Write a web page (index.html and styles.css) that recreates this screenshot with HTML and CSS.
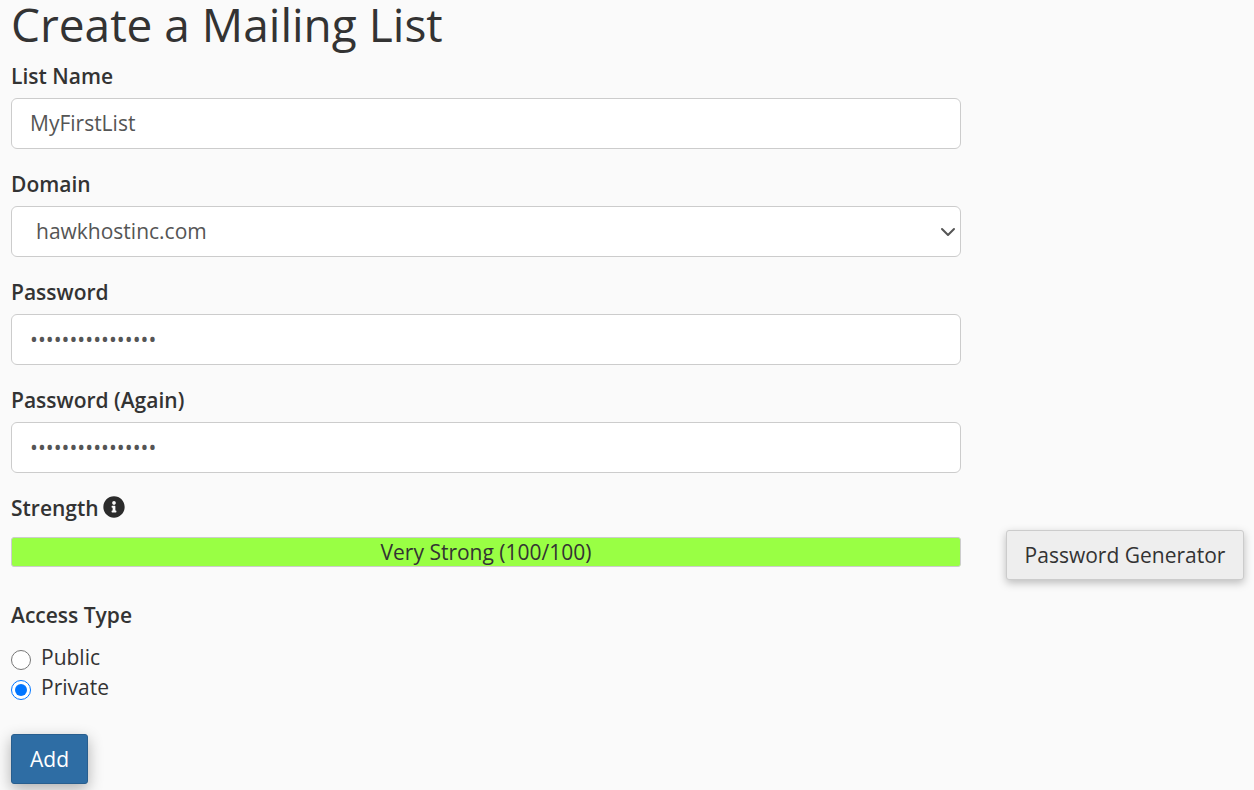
FILE: index.html
```html
<!DOCTYPE html>
<html lang="en">

<head>
    <meta charset="UTF-8">
    <meta name="viewport" content="width=device-width, initial-scale=1.0">
    <title>Create a Mailing List</title>
    <link rel="stylesheet" href="styles.css">
</head>

<body>
    <div class="wrap">
        <h1>Create a Mailing List</h1>

        <form class="list_form">
            <div class="form_group">
                <label for="list-name">List Name</label>
                <input type="text" id="list-name" class="form_control" value="MyFirstList">
            </div>

            <div class="form_group">
                <label for="domain">Domain</label>
                <select id="domain" class="form_control form_select">
                    <option>hawkhostinc.com</option>
                </select>
            </div>

            <div class="form_group">
                <label for="password">Password</label>
                <input type="password" id="password" class="form_control" value="abcdefghijklmnop">
            </div>

            <div class="form_group">
                <label for="password-again">Password (Again)</label>
                <input type="password" id="password-again" class="form_control" value="abcdefghijklmnop">
            </div>

            <div class="strength_label">
                <label>Strength</label>
                <svg class="info_icon" viewBox="0 0 512 512" width="22" height="22">
                    <path fill="#2b2b2b" d="M256 8C119 8 8 119 8 256s111 248 248 248 248-111 248-248S393 8 256 8zm0 110c23 0 42 19 42 42s-19 42-42 42-42-19-42-42 19-42 42-42zm56 254c0 7-5 12-12 12h-88c-7 0-12-5-12-12v-24c0-7 5-12 12-12h12v-64h-12c-7 0-12-5-12-12v-24c0-7 5-12 12-12h64c7 0 12 5 12 12v100h12c7 0 12 5 12 12v24z"/>
                </svg>
            </div>

            <div class="strength_row">
                <div class="strength_bar">Very Strong (100/100)</div>
                <button type="button" class="btn btn_default">Password Generator</button>
            </div>

            <div class="access_type">
                <label class="access_title">Access Type</label>
                <div class="radio_row">
                    <input type="radio" name="access" id="public">
                    <label for="public">Public</label>
                </div>
                <div class="radio_row">
                    <input type="radio" name="access" id="private" checked>
                    <label for="private">Private</label>
                </div>
            </div>

            <button type="button" class="btn btn_primary">Add</button>
        </form>
    </div>
</body>

</html>
```

FILE: styles.css
```css
html,
body {
    margin: 0;
    height: 100%;
    overflow: hidden;
}

body {
    background: #fafafa;
    color: #333;
    font-family: "Open Sans", sans-serif;
    font-size: 21px;
}

.wrap {
    padding-left: 11px;
}

h1 {
    margin: 0 0 14px;
    font-size: 46px;
    font-weight: 400;
    line-height: 48px;
}

label {
    font-weight: 600;
}

.form_group {
    margin-bottom: 21px;
}

.form_group label {
    display: block;
    height: 29px;
    line-height: 28px;
    margin-bottom: 7px;
}

.form_control {
    display: block;
    box-sizing: border-box;
    width: 950px;
    height: 51px;
    padding: 0 18px 2px;
    border: 1px solid #ccc;
    border-radius: 6px;
    background: #fff;
    color: #555;
    font-family: "Open Sans", sans-serif;
    font-size: 21px;
}

.form_select {
    appearance: none;
    padding-left: 24px;
    background: #fff url("data:image/svg+xml,%3Csvg xmlns='http://www.w3.org/2000/svg' viewBox='0 0 16 16'%3E%3Cpath fill='none' stroke='%23555' stroke-linecap='round' stroke-linejoin='round' stroke-width='2' d='m2 5 6 6 6-6'/%3E%3C/svg%3E") no-repeat right 4px center / 16px 16px;
}

.strength_label {
    display: flex;
    align-items: flex-start;
    gap: 4px;
    height: 29px;
    margin-bottom: 7px;
}

.strength_label label {
    line-height: 28px;
}

.info_icon {
    margin-top: 2px;
}

.strength_row {
    display: flex;
    align-items: flex-start;
    gap: 45px;
}

.strength_bar {
    box-sizing: border-box;
    width: 950px;
    height: 30px;
    margin-top: 7px;
    border: 1px solid #ccc;
    border-radius: 3px;
    background: #9f4;
    line-height: 28px;
    text-align: center;
}

.btn {
    box-sizing: border-box;
    height: 50px;
    border-radius: 3px;
    font-family: "Open Sans", sans-serif;
    font-size: 21px;
}

.btn_default {
    width: 238px;
    border: 1px solid #ccc;
    background: #eee;
    color: #333;
    box-shadow: 0 3px 8px rgba(0, 0, 0, 0.25);
}

.btn_primary {
    width: 77px;
    border: 1px solid #285e8e;
    background: #2e6da4;
    color: #fff;
    box-shadow: 0 5px 15px rgba(0, 0, 0, 0.3);
}

.access_type {
    margin-top: 21px;
    margin-bottom: 31px;
}

.access_title {
    display: block;
    height: 29px;
    line-height: 28px;
    margin-bottom: 13px;
}

.radio_row {
    display: flex;
    align-items: center;
    gap: 10px;
    height: 30px;
}

.radio_row label {
    margin-bottom: 2px;
    font-weight: 400;
}

.radio_row input {
    width: 20px;
    height: 20px;
    margin: 3px 0 0;
}
```
